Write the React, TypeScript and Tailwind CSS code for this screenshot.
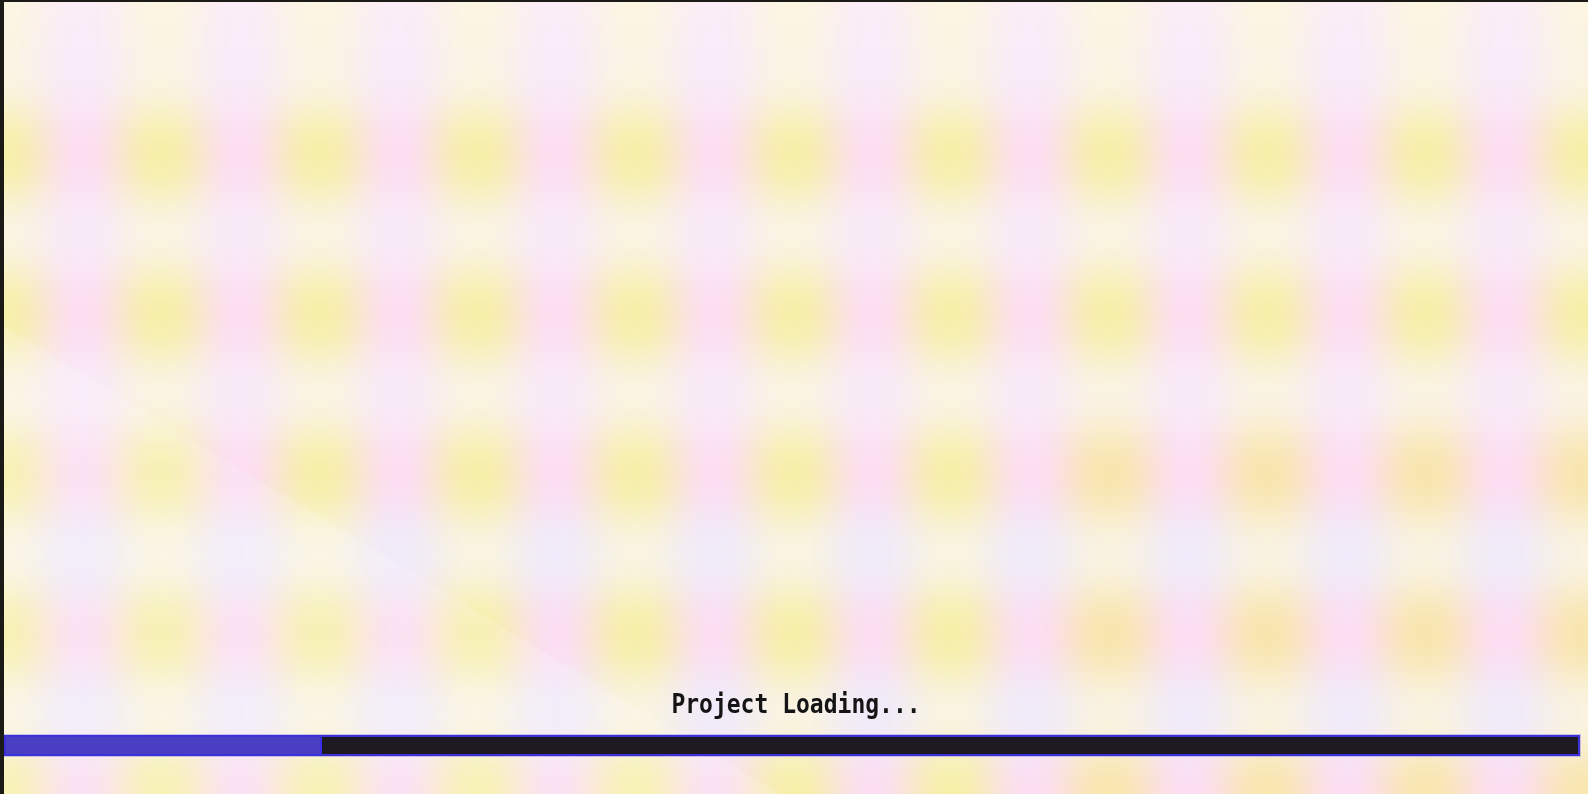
import React from 'react';

const ROWS = 11;
const COLS = 22;

// soft colour field behind the loader: blob rows alternate yellow / pink,
// rows in between are pale
const cellColor = (r: number, c: number) => {
  const blobRow = r % 2 === 0;
  const yellow = c % 2 === 0;
  if (blobRow) {
    if (r === 0) return yellow ? '#fbf6e0' : '#fbecf9';
    if (yellow) return c > 12 && r >= 6 ? '#f8e6a8' : '#f6f0a2';
    return '#fcdcf6';
  }
  if (r >= 7 && !yellow) return '#efebfb';
  return yellow ? '#faf4e2' : '#f9eafa';
};

const BlobField: React.FC = () => (
  <div className="pointer-events-none absolute inset-0 overflow-hidden">
    <div className="-ml-[40px] -mt-[48px] grid w-max grid-cols-[repeat(22,79px)] grid-rows-[repeat(11,80px)] blur-[22px]">
      {Array.from({ length: ROWS }).map((_, r) =>
        Array.from({ length: COLS }).map((__, c) => (
          <div key={`${r}-${c}`} style={{ backgroundColor: cellColor(r, c) }} />
        ))
      )}
    </div>
    {/* faint diagonal sheen in the lower left */}
    <div className="absolute inset-0 bg-white/15 [clip-path:polygon(0_41%,49%_100%,0_100%)]" />
  </div>
);

export default function App() {
  const progress = 20.1;

  return (
    <div className="relative h-[794px] w-full overflow-hidden border-l-4 border-t-2 border-[#1c1a16] bg-[#fbeff6]">
      <BlobField />

      <div className="relative flex h-full flex-col justify-end pb-[38px]">
        <div className="h-[28px] scale-y-[1.18] text-center font-['DejaVu_Sans_Mono',monospace] text-[23px] font-bold leading-[28px] text-[#141414]">
          Project Loading...
        </div>

        <div className="mr-[8px] mt-[17px] h-[21px] border-2 border-[#3b31d6] bg-[#1e1a22] shadow-[0_0_0_1px_rgba(140,130,235,0.45)]">
          <div
            className="h-full border-r-2 border-[#3a30ea] bg-[#4a3ec2]"
            style={{ width: `${progress}%` }}
          />
        </div>
      </div>
    </div>
  );
}
